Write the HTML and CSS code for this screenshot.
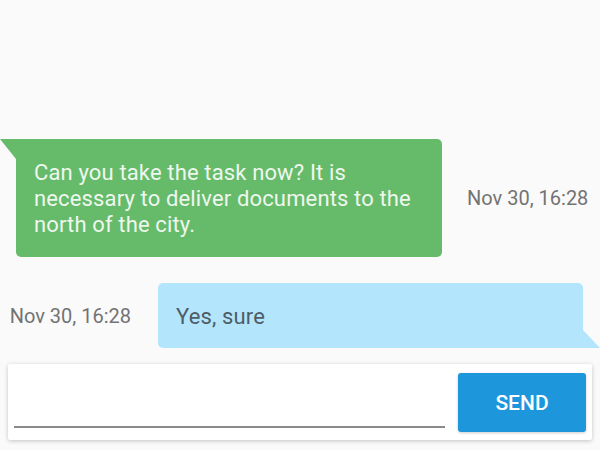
FILE: index.html
```html
<!DOCTYPE html>
<html>
<head>
<meta charset="utf-8">
<link rel="stylesheet" href="styles.css">
</head>
<body>
<div class="page">
  <div class="messages">
    <div class="row row-in">
      <div class="bubble bubble-green">Can you take the task now? It is necessary to deliver documents to the north of the city.</div>
      <div class="time time-right">Nov 30, 16:28</div>
    </div>
    <div class="row row-out">
      <div class="time time-left">Nov 30, 16:28</div>
      <div class="bubble bubble-blue">Yes, sure</div>
    </div>
  </div>
  <div class="composer">
    <div class="field"><input class="input" type="text"></div>
    <button class="send">SEND</button>
  </div>
</div>
</body>
</html>
```

FILE: styles.css
```css
html, body {
  margin: 0;
  padding: 0;
  background: #fafafa;
  font-family: Roboto, "Noto Sans", sans-serif;
}
.page {
  height: 450px;
  display: flex;
  flex-direction: column;
  overflow: hidden;
}
.messages {
  flex: 1;
  display: flex;
  flex-direction: column;
  justify-content: flex-end;
  gap: 26px;
  padding-bottom: 16px;
}
.row {
  display: flex;
  align-items: center;
}
.row-out {
  justify-content: flex-end;
}
.bubble {
  position: relative;
  font-size: 22px;
  line-height: 26px;
  letter-spacing: 0.14px;
}
.bubble-green {
  margin-left: 16px;
  width: 390px;
  padding: 21px 18px 19px 18px;
  background: #66bb6a;
  color: #eef7ee;
  border-radius: 0 5px 5px 5px;
}
.bubble-green::before {
  content: "";
  position: absolute;
  left: -16px;
  top: 0;
  border-top: 20px solid #66bb6a;
  border-left: 16px solid transparent;
}
.bubble-blue {
  margin-right: 17px;
  width: 389px;
  padding: 21px 18px 18px 18px;
  background: #b3e5fc;
  color: #4e5d65;
  border-radius: 5px 5px 0 5px;
}
.bubble-blue::after {
  content: "";
  position: absolute;
  right: -17px;
  bottom: 0;
  border-bottom: 18px solid #b3e5fc;
  border-right: 17px solid transparent;
}
.time {
  font-size: 20px;
  color: #737373;
  white-space: nowrap;
}
.time-right {
  margin-left: 25px;
}
.time-left {
  margin-right: 27px;
}
.composer {
  margin: 0 8px 10px 8px;
  height: 76px;
  box-sizing: border-box;
  padding: 9px 6px 8px 6px;
  background: #fff;
  border-radius: 2px;
  box-shadow: 0 1px 4px rgba(0, 0, 0, 0.22);
  display: flex;
  align-items: stretch;
  gap: 13px;
}
.field {
  flex: 1;
  display: flex;
  align-items: flex-end;
  padding-bottom: 4px;
}
.input {
  width: 100%;
  border: none;
  border-bottom: 2px solid #8a8a8a;
  outline: none;
  background: transparent;
  font-family: inherit;
  font-size: 20px;
  padding: 4px 0;
}
.send {
  width: 128px;
  border: none;
  border-radius: 3px;
  background: #1e96dc;
  color: #fff;
  font-family: inherit;
  font-weight: 500;
  font-size: 21px;
  box-shadow: 0 1px 3px rgba(0, 0, 0, 0.2);
  padding: 0;
}
```
